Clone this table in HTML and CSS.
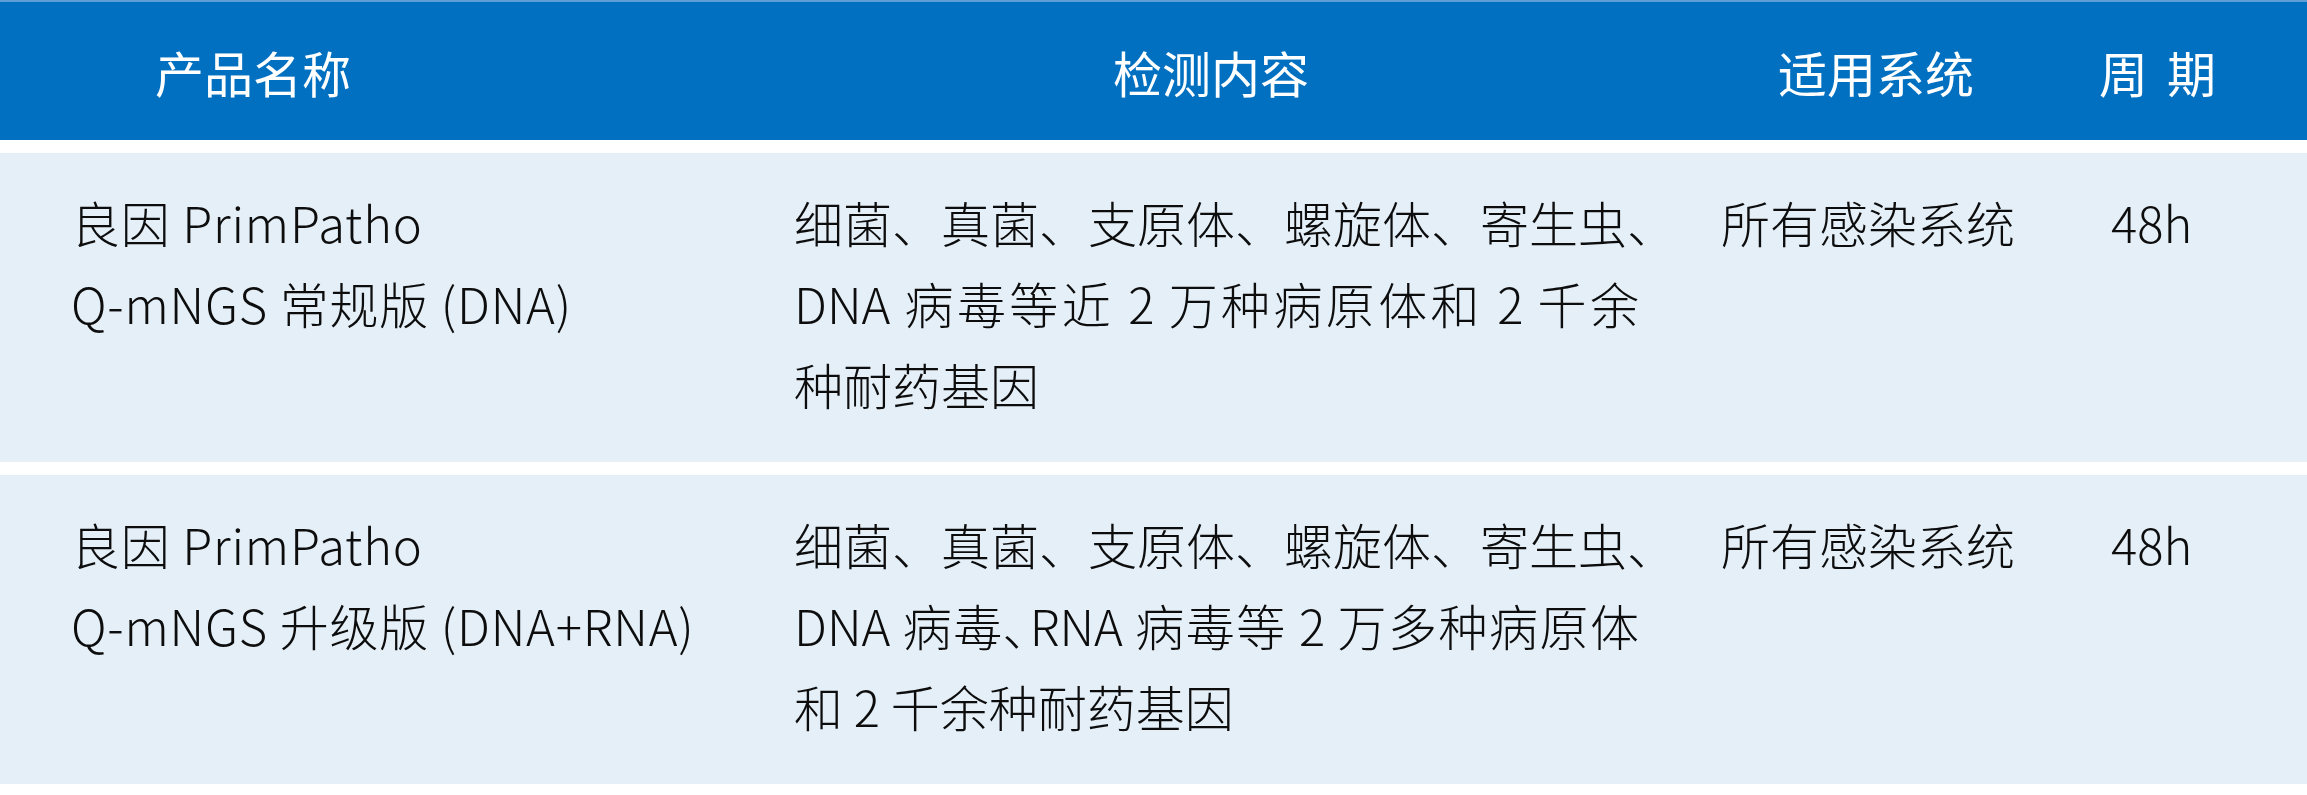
FILE: index.html
```html
<!DOCTYPE html>
<html lang="zh-CN">
<head>
<meta charset="utf-8">
<title>产品列表</title>
<link rel="stylesheet" href="styles.css">
</head>
<body>
<div class="table">
  <div class="head">
    <div class="hcell">产品名称</div>
    <div class="hcell">检测内容</div>
    <div class="hcell">适用系统</div>
    <div class="hcell period-head">周 期</div>
  </div>
  <div class="row">
    <div class="cell name">良因 PrimPatho<br>Q-mNGS 常规版 (DNA)</div>
    <div class="cell content">
      <span class="line">细菌、真菌、支原体、螺旋体、寄生虫、</span>
      <span class="line full">DNA 病毒等近 2 万种病原体和 2 千余</span>
      <span class="line">种耐药基因</span>
    </div>
    <div class="cell system">所有感染系统</div>
    <div class="cell period">48h</div>
  </div>
  <div class="row">
    <div class="cell name">良因 PrimPatho<br>Q-mNGS 升级版 (DNA+RNA)</div>
    <div class="cell content">
      <span class="line">细菌、真菌、支原体、螺旋体、寄生虫、</span>
      <span class="line full">DNA 病毒､RNA 病毒等 2 万多种病原体</span>
      <span class="line">和 2 千余种耐药基因</span>
    </div>
    <div class="cell system">所有感染系统</div>
    <div class="cell period">48h</div>
  </div>
</div>
</body>
</html>
```

FILE: styles.css
```css
html, body {
  margin: 0;
  padding: 0;
  background: #ffffff;
}

body {
  font-family: "Noto Sans CJK SC", "Noto Sans", sans-serif;
  font-weight: 300;
  color: #0d0d0d;
}

.table {
  display: flex;
  flex-direction: column;
  gap: 13px;
  width: 2307px;
}

.head {
  height: 140px;
  box-sizing: border-box;
  background: #0270c1;
  border-top: 2px solid #5d9fd6;
  display: grid;
  grid-template-columns: 958px 665px 321px 1fr;
  align-items: center;
  padding-left: 155px;
  color: #ffffff;
  font-size: 49px;
  font-weight: 400;
  line-height: 1;
}

.period-head {
  word-spacing: 8px;
}

.row {
  display: grid;
  grid-template-columns: 794px 927px 390px 1fr;
  background: #e4eff8;
  height: 309px;
  box-sizing: border-box;
  padding-top: 28px;
  font-size: 49px;
  line-height: 81px;
}

.cell.name {
  padding-left: 71px;
  white-space: nowrap;
  letter-spacing: 0.8px;
}

.cell.content {
  width: 845px;
}

.line {
  display: block;
  white-space: nowrap;
}

.line.full {
  text-align: justify;
  text-align-last: justify;
}
```
